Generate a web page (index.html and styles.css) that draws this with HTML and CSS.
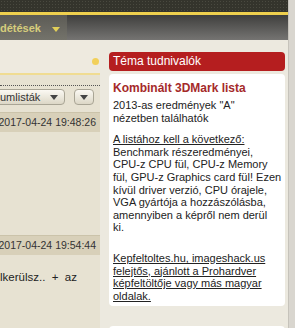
FILE: index.html
```html
<!DOCTYPE html>
<html lang="hu">
<head>
    <meta charset="UTF-8">
    <title>Téma tudnivalók</title>
    <link rel="stylesheet" href="styles.css">
</head>
<body>
    <div class="page">
        <div class="content">
            <div class="topstrip"></div>
            <div class="yellowline"></div>
            <div class="navbar">
                <div class="tab">détések <span class="tab-arrow"></span></div>
            </div>
            <div class="main">
                <div class="left">
                    <div class="left-top"><span class="dot"></span></div>
                    <div class="left-line"></div>
                    <div class="filters">
                        <div class="select">umlisták <span class="arrow"></span></div>
                        <div class="select small"><span class="arrow"></span></div>
                    </div>
                    <div class="datebar"><span>2017-04-24 19:48:26</span></div>
                    <div class="post-body"></div>
                    <div class="datebar"><span>2017-04-24 19:54:44</span></div>
                    <div class="post-text">lkerülsz..&nbsp; +&nbsp; az</div>
                </div>
                <div class="right">
                    <div class="box-head">Téma tudnivalók</div>
                    <div class="box">
                        <p class="title">Kombinált 3DMark lista</p>
                        <p class="intro">2013-as eredmények "A"<br>nézetben találhatók</p>
                        <p class="rules"><u>A listához kell a következő:</u><br>Benchmark részeredményei,<br>CPU-z CPU fül, CPU-z Memory<br>fül, GPU-z Graphics card fül! Ezen<br>kívül driver verzió, CPU órajele,<br>VGA gyártója a hozzászólásba,<br>amennyiben a képről nem derül<br>ki.</p>
                        <p class="hosts"><u>Kepfeltoltes.hu, imageshack.us<br>felejtős, ajánlott a Prohardver<br>képfeltöltője vagy más magyar<br>oldalak.</u></p>
                    </div>
                    <div class="box next"></div>
                </div>
            </div>
        </div>
        <div class="scrollbar"></div>
    </div>
</body>
</html>
```

FILE: styles.css
```css
body {
    margin: 0;
    font-family: "Liberation Sans", Arial, sans-serif;
    font-size: 11px;
    color: #222;
    background: #ece9df;
}
.page {
    display: flex;
    width: 295px;
    height: 328px;
    overflow: hidden;
}
.content {
    flex: 1;
    overflow: hidden;
}
.scrollbar {
    width: 6px;
    background: #d9d6cf;
    border-left: 1px solid #c6c3bb;
}
.topstrip {
    height: 12px;
    background-color: #34342c;
    background-image: radial-gradient(#4a4a40 1px, transparent 1px);
    background-size: 3px 3px;
}
.yellowline {
    height: 3px;
    background: #efd04e;
}
.navbar {
    height: 25px;
    background: linear-gradient(#3f3f3d, #757472);
}
.tab {
    width: 67px;
    height: 25px;
    box-sizing: border-box;
    background: linear-gradient(#5c5b55, #74736b);
    color: #d6cd7c;
    font-size: 11px;
    font-weight: bold;
    line-height: 27px;
    white-space: nowrap;
    overflow: hidden;
}
.tab-arrow {
    display: inline-block;
    margin-left: 8px;
    border-left: 4px solid transparent;
    border-right: 4px solid transparent;
    border-top: 5px solid #e2cf58;
    vertical-align: middle;
}
.main {
    display: flex;
}
.left {
    width: 100px;
    background: #e7e2d2;
}
.left-top {
    height: 33px;
    background: #eeeadf;
    display: flex;
    justify-content: flex-end;
    align-items: flex-end;
}
.dot {
    width: 7px;
    height: 7px;
    border-radius: 50%;
    background: #f2d05a;
    margin: 0 1px 8px 0;
}
.left-line {
    height: 2px;
    background: #f0dc92;
    margin-bottom: 10px;
}
.filters {
    display: flex;
    gap: 9px;
    border-top: 1px dotted #555;
    padding: 3px 0 7px;
}
.select {
    width: 69px;
    height: 16px;
    box-sizing: border-box;
    margin-left: -4px;
    padding-left: 3px;
    border: 1px solid #a9a595;
    border-radius: 4px;
    background: linear-gradient(#fbf9f3, #dcd7c6);
    color: #333;
    font-size: 11px;
    line-height: 14px;
    display: flex;
    justify-content: space-between;
    align-items: center;
}
.select.small {
    width: 20px;
    margin-left: 0;
    padding-left: 0;
    justify-content: center;
}
.arrow {
    border-left: 4px solid transparent;
    border-right: 4px solid transparent;
    border-top: 5px solid #444;
    margin-right: 6px;
}
.select.small .arrow {
    margin-right: 0;
}
.datebar {
    height: 20px;
    background: #d8d0b9;
    border-top: 1px solid #cbc3aa;
    box-sizing: border-box;
    display: flex;
    justify-content: flex-end;
    padding-right: 4px;
    font-size: 10.5px;
    line-height: 19px;
    color: #333;
    white-space: nowrap;
    overflow: hidden;
}
.post-body {
    height: 103px;
}
.post-text {
    padding-top: 16px;
    font-size: 11.5px;
    white-space: nowrap;
}
.right {
    flex: 1;
    padding: 12px 6px 0 9px;
}
.box-head {
    height: 19px;
    background: #b51e1f;
    border-radius: 4px;
    color: #fff;
    font-size: 12px;
    line-height: 19px;
    padding-left: 4px;
}
.box {
    margin-top: 3px;
    background: #fff;
    border-radius: 4px;
    padding: 7px 4px 4px 4px;
    line-height: 12.6px;
}
.box p {
    margin: 0;
    white-space: nowrap;
}
.box .title {
    font-size: 12px;
    font-weight: bold;
    color: #a52a2a;
    line-height: 14px;
}
.box .intro {
    margin-top: 4px;
}
.box .rules {
    margin-top: 9px;
}
.box .hosts {
    margin-top: 18px;
}
.box.next {
    margin-top: 20px;
    height: 20px;
    padding: 0;
}
```
